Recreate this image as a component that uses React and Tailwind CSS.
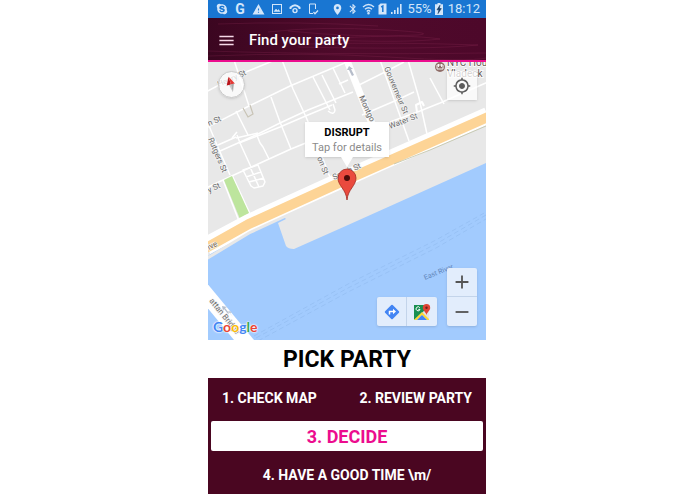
import React, { useState } from "react";
import { MdBluetooth, MdLocationOn, MdMyLocation, MdWarning, MdAdd, MdRemove, MdMenu } from "react-icons/md";
import { FaSkype } from "react-icons/fa";

const streets = [
  "M-2 30 L28 14 L72 -4",
  "M26 -2 L41 44",
  "M-2 66 L41 44 L82 24 L139 0",
  "M74 -2 L85 27 L98 55 L108 79",
  "M63 35 L72 60 L83 87",
  "M28 49 L40 73",
  "M10 83 L28 75",
  "M12 89 L30 81 L50 72 L72 61 L100 48 L145 30",
  "M28 76 L50 71",
  "M31 81 L52 73 L72 65 L100 53 L124 43",
  "M24 76 L29 70",
  "M29 73 L32 81 L43 105",
  "M48 71 L52 81 L55 85 L61 97",
  "M105 15 L122 48",
  "M114 13 L128 41",
  "M125 6 L137 31",
  "M131 22 L140 18",
  "M-2 126 L15 118 L50 102 L83 87 L110 76",
  "M-1 59 L9 83 L22 113",
  "M15 118 L31 159",
  "M24 113 L43 154",
  "M147 25 L175 11 L196 0",
  "M154 53 L189 38 L206 30",
  "M182 60 L212 49 L232 41 L280 20",
  "M172 -2 L201 79",
  "M200 -2 L211 36 L219 72",
  "M222 16 L236 42",
  "M108 79 L123 118",
];

function StatusBar() {
  return (
    <div className="flex h-[18px] items-center justify-between bg-[#1976d2] pr-[6px] pl-2 text-[#d3e6fa]">
      <div className="flex items-center gap-[6px]">
        <FaSkype size={12} />
        <span className="w-[12px] text-center text-sm leading-[18px] font-bold">G</span>
        <MdWarning size={13} />
        <svg width="12" height="12" viewBox="0 0 12 12" fill="none" stroke="currentColor">
          <rect x="1.5" y="1.5" width="9" height="9" />
          <path d="M3 8.5 L5 6 L6.5 7.5 L7.5 6.5 L9 8.5z" fill="currentColor" strokeWidth=".5" />
        </svg>
        <svg width="12" height="12" viewBox="0 0 12 12" fill="none" stroke="currentColor">
          <path d="M1.5 6 V4.5 Q6 0 10.5 4.5 V6" strokeWidth="2" />
          <circle cx="6" cy="7.6" r="2" strokeWidth="1.4" />
        </svg>
        <svg width="12" height="12" viewBox="0 0 12 12" fill="none" stroke="currentColor">
          <path d="M8.5 6 V1 H2.5 V10.5 H6" />
          <path d="M6.5 9 L8 10.8 L11 7.5" strokeWidth="1.3" />
        </svg>
      </div>
      <div className="flex items-center gap-[3px]">
        <MdLocationOn size={13} />
        <MdBluetooth size={12} />
        <svg width="13" height="12" viewBox="0 0 13 12" fill="none" stroke="currentColor" strokeWidth="1.4">
          <path d="M1 4 Q6.5 -1 12 4 M3 6.3 Q6.5 3 10 6.3 M4.8 8.4 Q6.5 6.8 8.2 8.4" />
          <circle cx="6.5" cy="10.3" r=".6" />
        </svg>
        <svg width="9" height="12" viewBox="0 0 9 12">
          <path d="M2.5 .5 H8.5 V11.5 H.5 V2.5z" fill="currentColor" />
          <path d="M3.2 4 L4.8 3 V9" fill="none" stroke="#1976d2" strokeWidth="1.5" />
        </svg>
        <svg width="12" height="12" viewBox="0 0 12 12" fill="currentColor">
          <path d="M1 9 h1.6 v2 H1z M4 7 h1.6 v4 H4z M7 4.5 h1.6 V11 H7z M10 1 h1.6 v10 H10z" />
        </svg>
        <span className="ml-[2px] text-[13px] leading-[18px]">55%</span>
        <svg width="8" height="12" viewBox="0 0 8 12">
          <path d="M2.5 0 h3 v1.2 H8 V12 H0 V1.2 h2.5z" fill="#d3e6fa" />
          <path d="M5 2.2 L2 6.8 H4 L3 10.6 L6.3 5.6 H4.3z" fill="#143a63" stroke="#143a63" strokeWidth=".6" />
        </svg>
        <span className="ml-[2px] text-[13px] leading-[18px]">18:12</span>
      </div>
    </div>
  );
}

function Header() {
  return (
    <header className="relative border-b-2 border-[#ec0c8e] bg-linear-to-r from-[#3b0620] via-[#4f0a2b] to-[#4d082a]">
      <svg className="absolute inset-0 h-full w-full" viewBox="0 0 278 42" preserveAspectRatio="none" fill="none" stroke="#8c2b57" strokeOpacity=".4" strokeWidth=".7">
        <path d="M60 14 Q110 8 180 12 Q230 15 210 17 Q150 20 80 13" />
        <path d="M130 20 Q200 16 232 21 Q200 25 120 22" />
        <path d="M100 26 Q190 24 270 27 Q220 32 90 29" />
        <path d="M0 33 Q120 37 278 35" />
        <path d="M0 38 Q100 34 180 39 T278 40" />
        <path d="M10 6 Q90 3 170 8" />
      </svg>
      <div className="relative flex h-[42px] items-center gap-[13px] px-[9px] pt-[3px]">
        <button type="button" aria-label="Menu" className="text-[#f7d9e8]">
          <MdMenu size={19} />
        </button>
        <h1 className="text-[15px] font-medium text-white">Find your party</h1>
      </div>
    </header>
  );
}

function MapDrawing() {
  return (
    <svg className="block w-full" viewBox="0 0 278 278" fontFamily="Roboto, sans-serif">
      <rect width="278" height="278" fill="#e8e8e8" />
      <g fill="none" stroke="#fff" strokeWidth="1.5" strokeLinejoin="round">
        {streets.map((d) => (
          <path key={d} d={d} />
        ))}
        <path d="M138 -4 L168 72" strokeWidth="7" />
        <path d="M35 108 L50 103 L57 120 L55 124 L46 126 L43 124z M42 105 L51 125 M38 115 L53 110 M41 120 L56 116" />
        <path d="M120 49 Q126 54 127 48 L125 42" />
        <path d="M209 50 L208 43 L214 40 L216 44" strokeWidth="2" />
      </g>
      <path d="M35 46 L40 55 L45 52 L42 43" fill="none" stroke="#c8c3b5" strokeWidth="1.2" />
      <path d="M16 118 L24 114 L41 151 L32 157z" fill="#bde59d" />

      <path d="M0 194 L13 183 L30 172 L61 158 L75 154 L78 157 L70 161 L78 184 Q80 187 86 187 L140 163 L278 101 V278 H0z" fill="#a2cbfe" />
      <path d="M-2 184 L41 161 L131 120 L280 54" fill="none" stroke="#fff" strokeWidth="18" />
      <path d="M-2 197 L41 171 L80 153 L175 110 L280 64" fill="none" stroke="#e8e8e8" strokeWidth="3" />
      <path d="M-2 186 L41 162 L131 121 L280 55" fill="none" stroke="#fdd496" strokeWidth="10" />
      <path d="M186 102 L222 88 L278 64" fill="none" stroke="#bfc1a6" strokeWidth=".8" />

      <g fill="none" stroke="#8db6ea" strokeWidth=".5" strokeDasharray="5 3">
        <path d="M48 276 L140 226 L228 182 L278 153" />
        <path d="M50 279 L140 230 L228 186 L278 157" />
        <path d="M46 274 L140 222 L228 178 L278 150" />
      </g>
      <path d="M-2 220 L46 278 H26 L-2 244z" fill="#fff" />
      <path d="M14 244 l5 1 -2 1 4 5 -1 1 -4 -5 -1 2z M20 249 l4 1 -2 1 3 4" fill="#b5bfce" />
      <path d="M139 8 l2 -4 4 3 -2 0 3 6 -2 1 -3 -6z" fill="#b6bdca" />

      <g fill="#6b6b6b" fontSize="8" stroke="#f4f4f4" strokeWidth="1.5" paintOrder="stroke">
        <text transform="translate(11 25) rotate(-24)">Henry St</text>
        <text transform="translate(1 64) rotate(-23)">n St</text>
        <text transform="translate(0 77) rotate(67)">Rutgers St</text>
        <text transform="translate(1 131) rotate(-25)">y St</text>
        <text transform="translate(151 35) rotate(66)">Montgo</text>
        <text transform="translate(176 6) rotate(67)">Gouverneur St</text>
        <text transform="translate(182 67) rotate(-21)">Water St</text>
        <text transform="translate(109 96) rotate(68)">on St</text>
        <text transform="translate(126 118) rotate(-24)">South St</text>
        <text transform="translate(1 188) rotate(-27)" fill="#7b654a">ive</text>
        <text transform="translate(1 239) rotate(51)">attan Bridge</text>
      </g>
      <text transform="translate(217 218) rotate(-22)" fontSize="7" fill="#5f84b8">East River</text>
      <g fontSize="10" fill="#665957" stroke="#fff" strokeWidth="1.5" paintOrder="stroke">
        <text x="239" y="4">NYC Hou</text>
        <text x="239" y="15">Vladeck</text>
      </g>
      <circle cx="232" cy="5" r="5" fill="#8f6d68" />
      <path d="M229 3 h6 v4 h-6z M230.5 2 v3 M233.5 2 v3" fill="none" stroke="#fff" strokeWidth=".9" />

      <path d="M139 138 C138 127 130 124 130 116 A9 9 0 0 1 148 116 C148 124 140 127 139 138z" fill="#ea4a3e" stroke="#a12a22" strokeWidth=".8" />
      <circle cx="139" cy="116" r="3" fill="#4a0b08" />
    </svg>
  );
}

function PartyMap() {
  const mapButton = "flex h-[29px] w-[30px] items-center justify-center";

  return (
    <section aria-label="Map" className="relative overflow-hidden">
      <MapDrawing />

      <button type="button" aria-label="Compass" className="absolute top-[9px] left-[10px] h-[27px] w-[27px] rounded-full border border-[#c9c9c9] bg-white/75 shadow-sm">
        <svg viewBox="0 0 26 26">
          <path d="M10 5 L8 14 L12.5 13z" fill="#b9141a" />
          <path d="M10 5 L12.5 13 L16.5 12z" fill="#e53935" />
          <path d="M14.5 21 L10.5 13.7 L12.5 13z" fill="#c9c9c9" />
          <path d="M14.5 21 L12.5 13 L15.5 12z" fill="#a8a8a8" />
        </svg>
      </button>

      <button type="button" aria-label="My location" className={`${mapButton} absolute top-[9px] right-[9px] bg-white/75 text-[#5c5c5c] shadow-sm`}>
        <MdMyLocation size={18} />
      </button>

      <button type="button" className="absolute top-[60px] left-1/2 w-[84px] -translate-x-1/2 bg-white pt-[3px] pb-[2px] text-[11px] leading-[15px] shadow">
        <span className="block font-bold text-black">DISRUPT</span>
        <span className="block text-[#8b8b8b]">Tap for details</span>
        <svg className="absolute top-full left-1/2 -translate-x-1/2" width="12" height="10" viewBox="0 0 12 10">
          <path d="M0 0 H12 L6 10z" fill="#fff" />
        </svg>
      </button>

      <div className="absolute right-[49px] bottom-[14px] flex divide-x divide-[#c3d4ea] rounded-xs bg-[#e2edfc] shadow-sm">
        <button type="button" aria-label="Directions" className={mapButton}>
          <svg width="16" height="16" viewBox="0 0 16 16">
            <rect x="2.6" y="2.6" width="10.8" height="10.8" rx="1" fill="#4285f4" transform="rotate(45 8 8)" />
            <path d="M5.5 10.5 V7.5 H9.5" fill="none" stroke="#fff" strokeWidth="1.5" />
            <path d="M9 4.8 L12 7.5 L9 10.2z" fill="#fff" />
          </svg>
        </button>
        <button type="button" aria-label="Open in maps" className={mapButton}>
          <svg width="18" height="18" viewBox="0 0 18 18">
            <rect x="1" y="2" width="15" height="15" rx="1" fill="#dfe3e8" />
            <path d="M1 2 H12 L12 7 L1 17z" fill="#188f51" />
            <path d="M1 17 L9 9 L16 16 V17 H14 L9 12 L4 17z" fill="#fdd835" />
            <path d="M4 17 L9 12 L14 17z" fill="#4285f4" />
            <path d="M6.8 4.8 A2 2 0 1 0 7 6.4 H5.3" fill="none" stroke="#fff" strokeWidth="1" />
            <path d="M13.5 12.5 C13.3 9 9.8 8 9.8 4.7 A3.7 3.7 0 0 1 17.2 4.7 C17.2 8 13.7 9 13.5 12.5z" fill="#de4436" />
            <circle cx="13.5" cy="4.7" r="1.2" fill="#70201b" />
          </svg>
        </button>
      </div>

      <div className="absolute right-[9px] bottom-[14px] flex flex-col divide-y divide-[#c3d4ea] rounded-xs bg-[#e2edfc] text-[#555] shadow-sm">
        <button type="button" aria-label="Zoom in" className={mapButton}>
          <MdAdd size={22} />
        </button>
        <button type="button" aria-label="Zoom out" className={mapButton}>
          <MdRemove size={22} />
        </button>
      </div>

      <div className="absolute bottom-[3px] left-[5px] font-['Lato',sans-serif] text-sm leading-5 font-bold [text-shadow:0_0_1px_white,0_0_2px_white,0_0_2px_white]">
        <span className="text-[#4285f4]">G</span>
        <span className="text-[#ea4335]">o</span>
        <span className="text-[#fbbc05]">o</span>
        <span className="text-[#4285f4]">g</span>
        <span className="text-[#34a853]">l</span>
        <span className="text-[#ea4335]">e</span>
      </div>
    </section>
  );
}

function App() {
  const [step, setStep] = useState(3);

  const stepClass = (n) =>
    `rounded-xs px-[11px] ${
      step === n
        ? "bg-white pt-[2px] text-lg text-[#ec0c8e]"
        : "py-1 text-sm text-white"
    }`;

  return (
    <div className="bg-white pr-px font-['Roboto',sans-serif]">
      <main className="mx-auto w-full max-w-[278px]">
        <StatusBar />
        <Header />
        <PartyMap />
        <h2 className="pt-[5px] pb-[3px] text-center text-[23px] leading-[30px] font-bold text-black">PICK PARTY</h2>
        <div className="flex flex-col gap-[9px] bg-[#4a0621] px-[3px] pt-[6px] pb-1 font-bold">
          <div className="flex justify-between">
            <button type="button" onClick={() => setStep(1)} className={stepClass(1)}>
              1. CHECK MAP
            </button>
            <button type="button" onClick={() => setStep(2)} className={stepClass(2)}>
              2. REVIEW PARTY
            </button>
          </div>
          <button type="button" onClick={() => setStep(3)} className={stepClass(3)}>
            3. DECIDE
          </button>
          <button type="button" onClick={() => setStep(4)} className={`${stepClass(4)} mt-px mb-px`}>
            4. HAVE A GOOD TIME \m/
          </button>
        </div>
      </main>
    </div>
  );
}

export default App;
